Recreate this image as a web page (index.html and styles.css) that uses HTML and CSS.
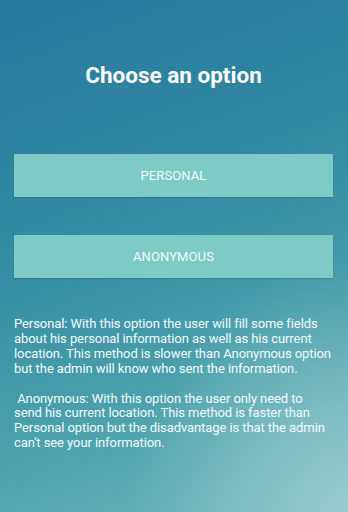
FILE: index.html
```html
<!DOCTYPE html>
<html>
<head>
<meta charset="utf-8">
<link rel="stylesheet" href="styles.css">
</head>
<body>
<div class="screen">
  <h1 class="title">Choose an option</h1>
  <div class="buttons">
    <button class="option">PERSONAL</button>
    <button class="option">ANONYMOUS</button>
  </div>
  <p class="info">Personal: With this option the user will fill some fields about his personal information as well as his current location. This method is slower than Anonymous option but the admin will know who sent the information.

 Anonymous: With this option the user only need to send his current location. This method is faster than Personal option but the disadvantage is that the admin can't see your information.</p>
</div>
</body>
</html>
```
FILE: styles.css
```css
html, body {
  margin: 0;
  padding: 0;
}
body {
  width: 348px;
  height: 512px;
  overflow: hidden;
  font-family: Roboto, "Liberation Sans", sans-serif;
}
.screen {
  box-sizing: border-box;
  width: 348px;
  height: 512px;
  padding: 60px 15px 0 14px;
  background:
    radial-gradient(ellipse 90% 70% at 100% 100%, rgba(160, 206, 210, 0.85), rgba(160, 206, 210, 0) 70%),
    linear-gradient(160deg, #287a9e 0%, #2f88a0 35%, #4aa0ac 70%, #6cb6bd 100%);
  color: #fff;
}
.title {
  margin: 0;
  font-size: 22.5px;
  line-height: 30px;
  font-weight: 700;
  text-align: center;
}
.buttons {
  display: flex;
  flex-direction: column;
  gap: 38px;
  margin-top: 64px;
}
.option {
  height: 43px;
  border: 0;
  padding: 0;
  background: #7ecbc5;
  color: #f2fbfa;
  font-family: Roboto, "Liberation Sans", sans-serif;
  font-size: 13px;
  letter-spacing: 0.1px;
  box-shadow: 0 1px 1px rgba(0, 0, 0, 0.12);
}
.info {
  margin: 39px 0 0;
  font-size: 13px;
  line-height: 14.9px;
  letter-spacing: -0.08px;
  white-space: pre-wrap;
  color: #f4fafb;
}
```
